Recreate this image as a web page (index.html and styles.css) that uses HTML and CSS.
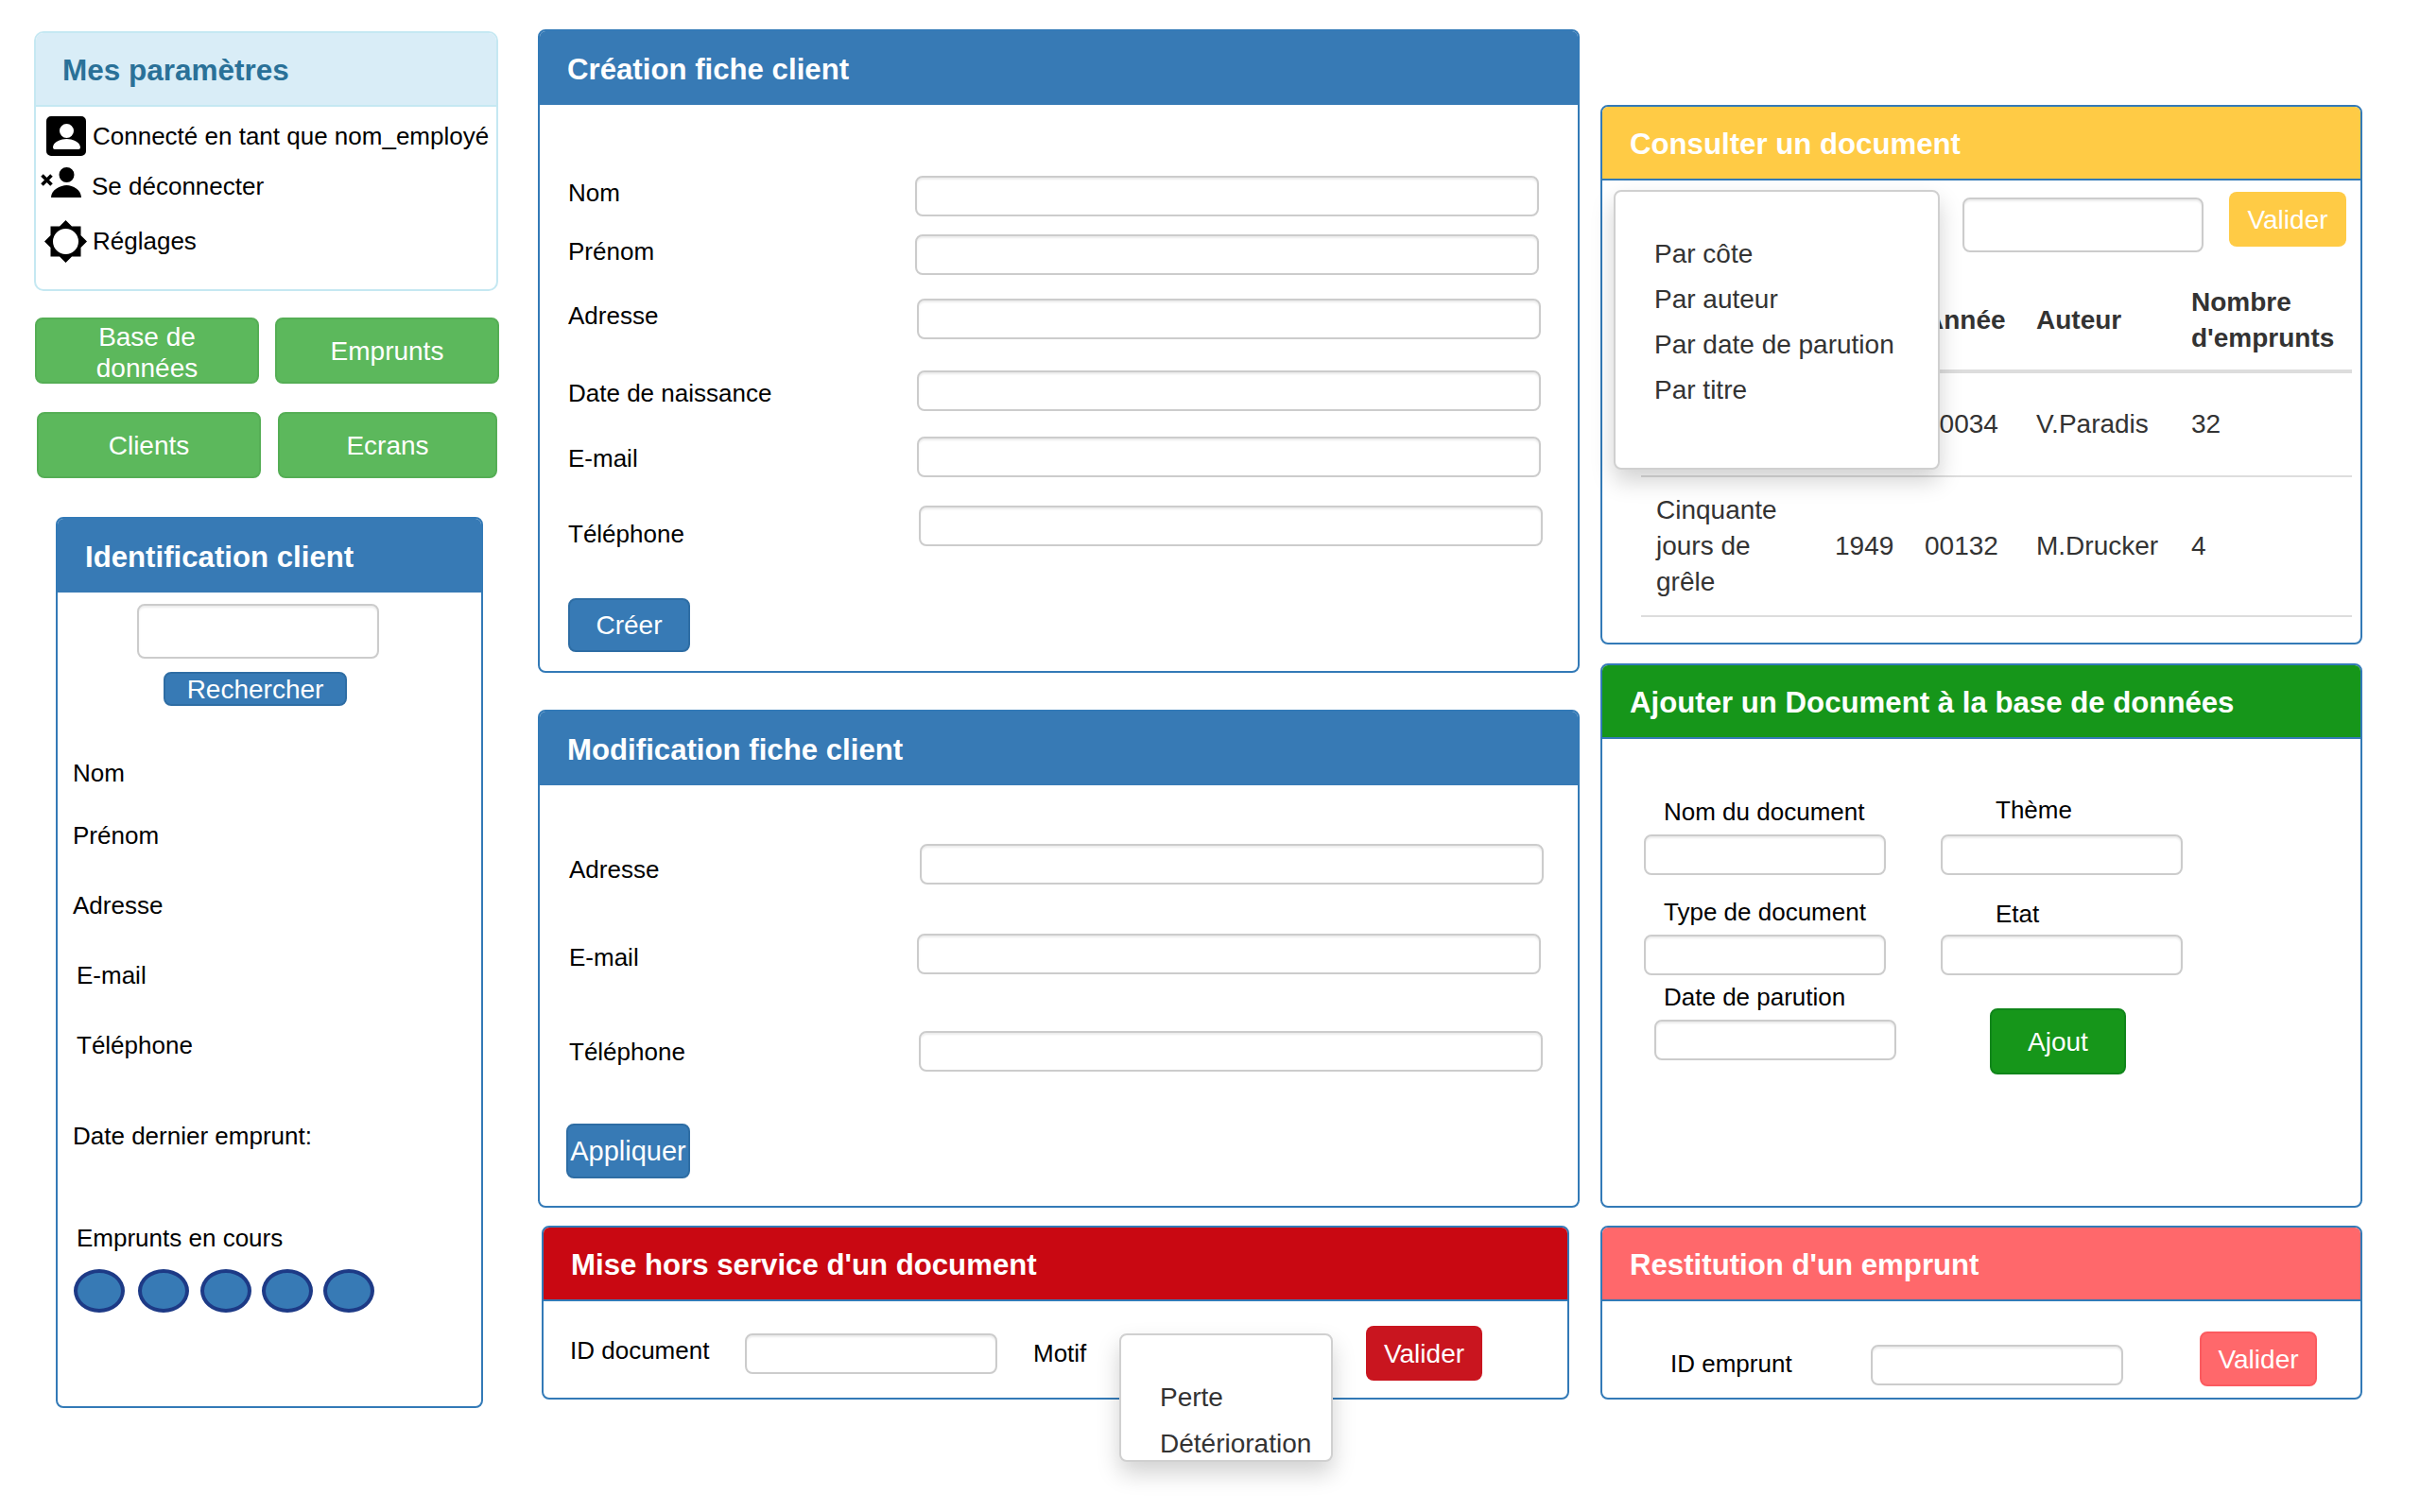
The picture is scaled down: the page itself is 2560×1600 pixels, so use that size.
FILE: index.html
```html
<!DOCTYPE html>
<html lang="fr">
<head>
    <meta charset="UTF-8">
    <title>Espace employé</title>
    <link rel="stylesheet" href="styles.css">
</head>
<body>
<div class="page">
    <div class="col col-left">
        <section class="params">
            <h2 class="params-head">Mes paramètres</h2>
            <ul class="params-list">
                <li class="param-user">
                    <svg class="ico ico-user" viewBox="0 0 42 42"><path fill-rule="evenodd" d="M5 0h32a5 5 0 0 1 5 5v32a5 5 0 0 1-5 5H5a5 5 0 0 1-5-5V5a5 5 0 0 1 5-5zM21.500 8a7.500 7.500 0 1 0 0 15 7.500 7.500 0 0 0 0-15zM9 35h25a2 2 0 0 0 2-2c0-6-9-9-14.500-9S7 27 7 33a2 2 0 0 0 2 2z"/></svg>
                    Connecté en tant que nom_employé
                </li>
                <li class="param-out">
                    <svg class="ico ico-out" viewBox="0 0 43 32"><path d="M27.500 0a8 8 0 1 1 0 16 8 8 0 0 1 0-16zM11 32c0-8 10-13 16.500-13S43 24 43 32z"/><path d="M1.500 8.500l10 10M11.500 8.500l-10 10" stroke="#000" stroke-width="3.6" fill="none"/></svg>
                    Se déconnecter
                </li>
                <li class="param-gear">
                    <svg class="ico ico-gear" viewBox="0 0 45 45"><path fill-rule="evenodd" d="M22.500 0L29 6.500H38.500V16L45 22.500 38.500 29V38.500H29L22.500 45 16 38.500H6.500V29L0 22.500 6.500 16V6.500H16zM22.500 9a13.500 13.500 0 1 0 0 27 13.500 13.500 0 0 0 0-27z"/></svg>
                    Réglages
                </li>
            </ul>
        </section>

        <div class="nav-row nav-row-a">
            <button class="btn btn-green btn-base">Base de données</button>
            <button class="btn btn-green btn-emprunts">Emprunts</button>
        </div>
        <div class="nav-row nav-row-b">
            <button class="btn btn-green btn-clients">Clients</button>
            <button class="btn btn-green btn-ecrans">Ecrans</button>
        </div>

        <section class="panel panel-ident">
            <h2 class="panel-head">Identification client</h2>
            <div class="ident-body">
                <input class="field field-search" type="text">
                <button class="btn btn-blue btn-search">Rechercher</button>
                <p class="ident-line l-nom">Nom</p>
                <p class="ident-line l-prenom">Prénom</p>
                <p class="ident-line l-adresse">Adresse</p>
                <p class="ident-line l-mail">E-mail</p>
                <p class="ident-line l-tel">Téléphone</p>
                <p class="ident-line l-date">Date dernier emprunt:</p>
                <p class="ident-line l-cours">Emprunts en cours</p>
                <div class="dots">
                    <span class="dot"></span>
                    <span class="dot"></span>
                    <span class="dot"></span>
                    <span class="dot"></span>
                    <span class="dot"></span>
                </div>
            </div>
        </section>
    </div>

    <div class="col col-mid">
        <section class="panel panel-create">
            <h2 class="panel-head">Création fiche client</h2>
            <div class="form-body create-body">
                <div class="row r-nom"><label>Nom</label><input class="field" type="text"></div>
                <div class="row r-prenom"><label>Prénom</label><input class="field" type="text"></div>
                <div class="row r-adresse"><label>Adresse</label><input class="field" type="text"></div>
                <div class="row r-naiss"><label>Date de naissance</label><input class="field" type="text"></div>
                <div class="row r-mail"><label>E-mail</label><input class="field" type="text"></div>
                <div class="row r-tel"><label>Téléphone</label><input class="field" type="text"></div>
                <button class="btn btn-blue btn-creer">Créer</button>
            </div>
        </section>

        <section class="panel panel-modif">
            <h2 class="panel-head">Modification fiche client</h2>
            <div class="form-body modif-body">
                <div class="row m-adresse"><label>Adresse</label><input class="field" type="text"></div>
                <div class="row m-mail"><label>E-mail</label><input class="field" type="text"></div>
                <div class="row m-tel"><label>Téléphone</label><input class="field" type="text"></div>
                <button class="btn btn-blue btn-appliquer">Appliquer</button>
            </div>
        </section>

        <section class="panel panel-red">
            <h2 class="panel-head">Mise hors service d'un document</h2>
            <div class="hs-body">
                <label class="hs-id">ID document</label>
                <input class="field hs-input" type="text">
                <label class="hs-motif">Motif</label>
                <div class="menu menu-motif">
                    <a>Perte</a>
                    <a>Détérioration</a>
                </div>
                <button class="btn btn-red btn-hs">Valider</button>
            </div>
        </section>
    </div>

    <div class="col col-right">
        <section class="panel panel-yellow">
            <h2 class="panel-head">Consulter un document</h2>
            <div class="consult-body">
                <div class="menu menu-tri">
                    <a>Par côte</a>
                    <a>Par auteur</a>
                    <a>Par date de parution</a>
                    <a>Par titre</a>
                </div>
                <div class="consult-top">
                    <input class="field consult-input" type="text">
                    <button class="btn btn-yellow btn-consult">Valider</button>
                </div>
                <table class="docs">
                    <thead>
                        <tr><th></th><th></th><th>Année</th><th>Auteur</th><th>Nombre d'emprunts</th></tr>
                    </thead>
                    <tbody>
                        <tr class="row-one"><td></td><td></td><td>00034</td><td>V.Paradis</td><td>32</td></tr>
                        <tr><td>Cinquante jours de grêle</td><td>1949</td><td>00132</td><td>M.Drucker</td><td>4</td></tr>
                    </tbody>
                </table>
            </div>
        </section>

        <section class="panel panel-green">
            <h2 class="panel-head">Ajouter un Document à la base de données</h2>
            <div class="add-body">
                <div class="add-col add-col-a">
                    <label class="a-nom">Nom du document</label>
                    <input class="field add-field" type="text">
                    <label class="a-type">Type de document</label>
                    <input class="field add-field" type="text">
                    <label class="a-date">Date de parution</label>
                    <input class="field add-field a-date-field" type="text">
                </div>
                <div class="add-col add-col-b">
                    <label class="a-theme">Thème</label>
                    <input class="field add-field" type="text">
                    <label class="a-etat">Etat</label>
                    <input class="field add-field" type="text">
                    <button class="btn btn-darkgreen btn-ajout">Ajout</button>
                </div>
            </div>
        </section>

        <section class="panel panel-pink">
            <h2 class="panel-head">Restitution d'un emprunt</h2>
            <div class="rest-body">
                <label class="rest-label">ID emprunt</label>
                <input class="field rest-input" type="text">
                <button class="btn btn-pink btn-rest">Valider</button>
            </div>
        </section>
    </div>
</div>
</body>
</html>
```

FILE: styles.css
```css
* {
    box-sizing: border-box;
}
html, body {
    margin: 0;
    background: #fff;
}
body {
    font-family: "Liberation Sans", Arial, sans-serif;
    font-size: 26px;
    color: #000;
    width: 2560px;
    height: 1600px;
    overflow: hidden;
}
.page {
    display: flex;
    align-items: flex-start;
}
.col {
    display: flex;
    flex-direction: column;
}
.col-left {
    width: 528px;
    margin-left: 36px;
    padding-top: 33px;
}
.col-mid {
    width: 1102px;
    margin-left: 5px;
    padding-top: 31px;
}
.col-right {
    width: 806px;
    margin-left: 22px;
    padding-top: 111px;
}

h2, p, ul {
    margin: 0;
    padding: 0;
}

/* panels */
.panel {
    border: 2px solid #337ab7;
    border-radius: 8px;
    background: #fff;
}
.panel-head {
    height: 78px;
    padding: 4px 0 0 29px;
    display: flex;
    align-items: center;
    font-size: 31.200px;
    font-weight: bold;
    color: #fff;
    background: #377ab5;
    border-radius: 6px 6px 0 0;
}
.panel-create { height: 681px; }
.panel-modif { height: 527px; margin-top: 39px; }
.panel-red { width: 1087px; height: 184px; margin-top: 19px; margin-left: 4px; }
.panel-yellow { height: 571px; }
.panel-green { height: 576px; margin-top: 20px; }
.panel-pink { height: 184px; margin-top: 19px; }

.panel-red .panel-head { background: #c90812; border-bottom: 2px solid #337ab7; }
.panel-yellow .panel-head { background: #ffcb45; border-bottom: 2px solid #337ab7; }
.panel-green .panel-head { background: #16961a; border-bottom: 2px solid #337ab7; }
.panel-pink .panel-head { background: #ff686b; border-bottom: 2px solid #337ab7; }

/* inputs and buttons */
.field {
    height: 43px;
    border: 2px solid #ccc;
    border-radius: 8px;
    background: #fff;
    box-shadow: inset 0 2px 2px rgba(0, 0, 0, 0.075);
    display: block;
}
.btn {
    border: 2px solid transparent;
    border-radius: 8px;
    color: #fff;
    font-family: inherit;
    font-size: 28px;
    line-height: 33px;
    padding: 0;
    display: block;
}
.btn-green { background: #5cb85c; border-color: #55ae55; }
.btn-blue { background: #377ab5; border-color: #2e6da4; }
.btn-red { background: #c9151f; }
.btn-yellow { background: #ffcb45; }
.btn-darkgreen { background: #16961a; border-color: #10851a; }
.btn-pink { background: #ff686b; border-color: #fb5a5f; }

/* mes parametres */
.params {
    width: 491px;
    height: 275px;
    border: 2px solid #c5e8f2;
    border-radius: 10px;
}
.params-head {
    height: 78px;
    padding: 3px 0 0 28px;
    display: flex;
    align-items: center;
    font-size: 31.500px;
    font-weight: bold;
    color: #2a7198;
    background: #d9edf7;
    border-radius: 8px 8px 0 0;
    border-bottom: 2px solid #c5e8f2;
}
.params-list {
    list-style: none;
}
.params-list li {
    display: flex;
    align-items: center;
}
.ico {
    display: block;
    flex: none;
}
.param-user {
    padding: 10px 0 0 11px;
    gap: 7px;
}
.ico-user { width: 42px; height: 42px; }
.param-out {
    padding: 17px 0 0 5px;
    gap: 11px;
}
.ico-out { width: 43px; height: 32px; margin-top: -10px; }
.param-gear {
    padding: 20px 0 0 9px;
    gap: 6px;
}
.ico-gear { width: 45px; height: 45px; }

.nav-row {
    display: flex;
}
.nav-row .btn {
    height: 70px;
}
.nav-row-a {
    margin-top: 28px;
    padding-left: 1px;
    gap: 17px;
}
.nav-row-b {
    margin-top: 30px;
    padding-left: 3px;
    gap: 18px;
}
.btn-base, .btn-emprunts, .btn-clients { width: 237px; }
.btn-base { padding: 2px 40px 0; }
.btn-ecrans { width: 232px; }

/* identification */
.panel-ident {
    width: 452px;
    height: 943px;
    margin: 41px 0 0 23px;
}
.ident-body {
    padding-top: 12px;
}
.field-search {
    width: 256px;
    height: 58px;
    margin-left: 84px;
}
.btn-search {
    width: 194px;
    height: 36px;
    margin: 14px 0 0 112px;
    padding-top: 2px;
    line-height: 30px;
}
.ident-line {
    padding-left: 16px;
    line-height: 30px;
}
.l-nom { margin-top: 56px; }
.l-prenom { margin-top: 36px; }
.l-adresse { margin-top: 44px; }
.l-mail { margin-top: 44px; padding-left: 20px; }
.l-tel { margin-top: 44px; padding-left: 20px; }
.l-date { margin-top: 66px; }
.l-cours { margin-top: 78px; padding-left: 20px; }
.dots {
    display: flex;
    gap: 11px;
    margin: 18px 0 0 17px;
}
.dot {
    width: 54px;
    height: 46px;
    border: 4px solid #1d3a86;
    border-radius: 50%;
    background: #377ab5;
}
.dot:nth-child(1) { margin-right: 3px; }
.dot:nth-child(2) { margin-right: 1px; }

/* formulaires client */
.form-body {
    padding-left: 30px;
}
.row {
    display: flex;
    align-items: center;
}
.row label {
    flex: none;
}
.row .field {
    width: 660px;
}
.r-nom label, .r-prenom label { width: 367px; }
.r-adresse label, .r-naiss label, .r-mail label { width: 369px; }
.r-tel label { width: 371px; }
.r-nom { padding-top: 75px; }
.r-prenom { padding-top: 19px; }
.r-adresse { padding-top: 25px; }
.r-naiss { padding-top: 33px; }
.r-mail { padding-top: 27px; }
.r-tel { padding-top: 26px; }
.r-nom label { margin-bottom: 7px; }
.r-prenom label, .r-adresse label { margin-bottom: 6px; }
.r-naiss label { margin-top: 6px; }
.r-mail label { margin-top: 4px; }
.r-tel label { margin-top: 19px; }
.btn-creer {
    width: 129px;
    height: 57px;
    margin-top: 52px;
}
.modif-body { padding-left: 31px; }
.m-adresse label { width: 371px; margin-top: 12px; }
.m-mail label { width: 368px; margin-top: 8px; }
.m-tel label { width: 370px; margin-top: 2px; }
.m-adresse { padding-top: 62px; }
.m-mail { padding-top: 52px; }
.m-tel { padding-top: 60px; }
.btn-appliquer {
    width: 131px;
    height: 58px;
    margin: 55px 0 0 -3px;
    font-size: 29px;
}

/* mise hors service */
.hs-body {
    display: flex;
    align-items: flex-start;
    padding-left: 28px;
}
.hs-id {
    margin-top: 37px;
    width: 185px;
}
.hs-input {
    width: 267px;
    margin-top: 34px;
}
.hs-motif {
    margin: 40px 0 0 38px;
    width: 91px;
}
.menu {
    display: flex;
    flex-direction: column;
    position: relative;
    z-index: 2;
    background: #fff;
    border: 2px solid #d0d0d0;
    border-radius: 8px;
    box-shadow: 0 12px 24px rgba(0, 0, 0, 0.18);
    color: #333;
    font-size: 28px;
    line-height: 32px;
}
.menu-motif {
    width: 226px;
    height: 136px;
    margin-top: 34px;
    padding: 50px 0 0 41px;
    gap: 17px;
}
.btn-hs {
    width: 123px;
    height: 58px;
    margin: 26px 0 0 35px;
}

/* consulter */
.consult-body {
    position: relative;
    padding: 0 8px 0 41px;
}
.menu-tri {
    position: absolute;
    left: 12px;
    top: 10px;
    width: 345px;
    height: 296px;
    padding: 50px 0 0 41px;
    gap: 16px;
}
.consult-top {
    display: flex;
    align-items: flex-start;
    height: 102px;
}
.consult-input {
    width: 255px;
    height: 58px;
    margin: 18px 0 0 340px;
}
.btn-consult {
    width: 124px;
    height: 58px;
    margin: 12px 0 0 27px;
}
.docs {
    border-collapse: collapse;
    width: 752px;
    color: #333;
    font-size: 28px;
    line-height: 38px;
    table-layout: fixed;
}
.docs th, .docs td {
    padding: 16px;
    text-align: left;
    vertical-align: middle;
    border-bottom: 2px solid #ddd;
}
.docs th {
    border-bottom-width: 4px;
    padding: 8px 16px 14px;
}
.docs th:nth-child(1) { width: 189px; }
.docs th:nth-child(2) { width: 95px; }
.docs th:nth-child(3) { width: 118px; }
.docs th:nth-child(4) { width: 164px; }
.row-one td { height: 111px; }

/* ajouter */
.add-body {
    display: flex;
    padding-top: 62px;
}
.add-col label {
    display: block;
    line-height: 30px;
}
.add-field {
    width: 256px;
}
.add-col-a { padding-left: 44px; }
.add-col-b { padding-left: 47px; }
.a-nom, .a-type, .a-date { padding-left: 21px; height: 39px; }
.a-type { margin-top: 24px; }
.a-date { margin-top: 8px; }
.a-date-field { margin-left: 11px; }
.a-theme { padding-left: 58px; height: 41px; margin-top: -2px; }
.a-etat { padding-left: 58px; margin-top: 26px; height: 37px; }
.btn-ajout {
    width: 144px;
    height: 70px;
    margin: 35px 0 0 52px;
}

/* restitution */
.rest-body {
    display: flex;
    align-items: flex-start;
    padding-left: 72px;
}
.rest-label {
    width: 212px;
    margin-top: 51px;
}
.rest-input {
    width: 267px;
    margin-top: 46px;
}
.btn-rest {
    width: 124px;
    height: 58px;
    margin: 32px 0 0 81px;
}
```
